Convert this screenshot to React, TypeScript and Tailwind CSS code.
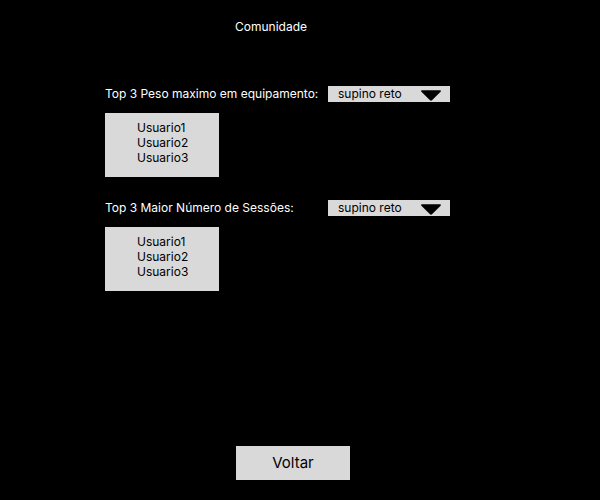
import { useId } from "react";

const users = ["Usuario1", "Usuario2", "Usuario3"];

function Ranking({ title }: { title: string }) {
  const id = useId();
  return (
    <section className="w-[345px]">
      <div className="flex h-4 items-center justify-between">
        <label htmlFor={id} className="whitespace-nowrap text-white">
          {title}
        </label>
        <div className="grid h-4 w-[122px] items-start bg-[#d9d9d9]">
          <select
            id={id}
            className="col-start-1 row-start-1 h-4 w-full appearance-none bg-transparent pl-2.5 leading-4 text-black"
          >
            <option>supino reto</option>
          </select>
          <svg
            viewBox="0 0 20 11"
            aria-hidden="true"
            className="pointer-events-none col-start-1 row-start-1 mt-1 mr-[9px] h-[11px] w-5 justify-self-end"
          >
            <path d="M1 0.200h18c.9 0 1.300.9.600 1.500l-8.600 8.600c-.6.6-1.400.6-2 0L.4 1.700C-.3 1.100.1.200 1 .2Z" fill="#000" />
          </svg>
        </div>
      </div>
      <ol className="mt-[11px] h-16 w-[114px] bg-[#d9d9d9] pt-[7px] pl-8 leading-[15px] text-black">
        {users.map((user) => (
          <li key={user}>{user}</li>
        ))}
      </ol>
    </section>
  );
}

export default function App() {
  return (
    <main className="flex min-h-screen flex-col bg-black pt-[19px] pb-5 font-['Inter',sans-serif] text-[12px]">
      <h1 className="ml-[235px] leading-[15px] text-white">Comunidade</h1>
      <div className="mt-[52px] ml-[105px] flex flex-col gap-[23px]">
        <Ranking title="Top 3 Peso maximo em equipamento:" />
        <Ranking title="Top 3 Maior Número de Sessões:" />
      </div>
      <button type="button" className="mt-auto ml-[236px] h-[34px] w-[114px] bg-[#d9d9d9] text-[15px] text-black">
        Voltar
      </button>
    </main>
  );
}
